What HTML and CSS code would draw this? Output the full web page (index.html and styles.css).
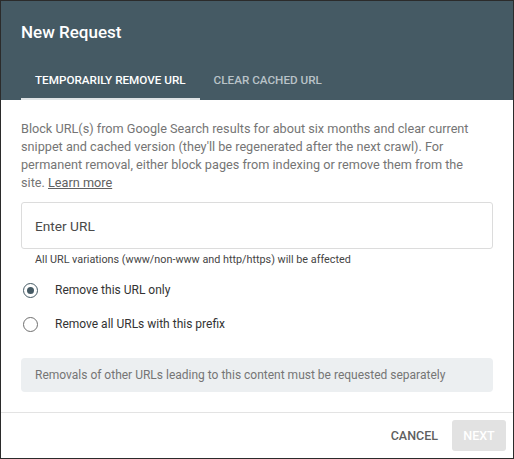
FILE: index.html
```html
<!DOCTYPE html>
<html lang="en">
<head>
    <meta charset="UTF-8">
    <title>New Request</title>
    <link rel="stylesheet" href="styles.css">
</head>
<body>

    <div class="dialog">
        <!-- Header with title and tabs -->
        <div class="dialog-header">
            <h2 class="dialog-title">New Request</h2>
            <div class="tabs">
                <div class="tab active">TEMPORARILY REMOVE URL</div>
                <div class="tab">CLEAR CACHED URL</div>
            </div>
        </div>

        <!-- Body -->
        <div class="dialog-body">
            <p class="intro">Block URL(s) from Google Search results for about six months and clear current snippet and cached version (they'll be regenerated after the next crawl). For permanent removal, either block pages from indexing or remove them from the site. <a href="#">Learn more</a></p>

            <div class="url-field">
                <input type="text" placeholder="Enter URL">
            </div>
            <div class="hint">All URL variations (www/non-www and http/https) will be affected</div>

            <div class="radios">
                <label class="radio-row">
                    <span class="radio checked"></span>
                    <span class="radio-label">Remove this URL only</span>
                </label>
                <label class="radio-row">
                    <span class="radio"></span>
                    <span class="radio-label">Remove all URLs with this prefix</span>
                </label>
            </div>

            <div class="note">Removals of other URLs leading to this content must be requested separately</div>
        </div>

        <!-- Footer buttons -->
        <div class="dialog-footer">
            <button class="btn-text">CANCEL</button>
            <button class="btn-next" disabled>NEXT</button>
        </div>
    </div>

</body>
</html>
```

FILE: styles.css
```css
/* Page */
body {
    margin: 0;
    font-family: Roboto, 'Liberation Sans', Arial, sans-serif;
    background: #fff;
}

.dialog {
    width: 514px;
    height: 459px;
    box-sizing: border-box;
    border: 1px solid #2b2b2b;
    display: flex;
    flex-direction: column;
    background: #fff;
}

/* Header */
.dialog-header {
    background-color: #455a64;
    padding: 0 20px;
    height: 99px;
    display: flex;
    flex-direction: column;
}

.dialog-title {
    margin: 0;
    padding-top: 20px;
    font-size: 17px;
    font-weight: 500;
    line-height: 22px;
    color: #fff;
}

.tabs {
    display: flex;
    margin-top: auto;
}

.tab {
    padding: 0 14px;
    height: 39px;
    display: flex;
    align-items: center;
    font-size: 11.7px;
    font-weight: 500;
    color: #b9c3c8;
    box-sizing: border-box;
    border-bottom: 2px solid transparent;
}

.tab.active {
    color: #fff;
    border-bottom-color: #dfe3e5;
}

/* Body */
.dialog-body {
    padding: 20px 20px 0;
    flex: 1;
}

.intro {
    margin: 0;
    padding-right: 10px;
    font-size: 12.7px;
    line-height: 18px;
    color: #757575;
}

.intro a {
    color: #616161;
    text-decoration: underline;
}

.url-field {
    margin-top: 10px;
}

.url-field input {
    width: 100%;
    box-sizing: border-box;
    height: 47px;
    border: 1px solid #dcdcdc;
    border-radius: 3px;
    padding: 0 13px;
    font-family: inherit;
    font-size: 13.7px;
    outline: none;
}

.url-field input::placeholder {
    color: #4a4a4a;
}

.hint {
    padding: 4px 14px 0;
    font-size: 10.8px;
    line-height: 14px;
    color: #444;
}

.radios {
    margin-top: 6px;
}

.radio-row {
    display: flex;
    align-items: center;
    height: 34px;
    cursor: pointer;
}

.radio {
    width: 15px;
    height: 15px;
    box-sizing: border-box;
    border: 1.5px solid #6f6f6f;
    border-radius: 50%;
    margin-left: 2px;
    display: flex;
    align-items: center;
    justify-content: center;
}

.radio.checked {
    border-color: #455a64;
}

.radio.checked::after {
    content: "";
    width: 7px;
    height: 7px;
    border-radius: 50%;
    background: #455a64;
}

.radio-label {
    margin-left: 17px;
    font-size: 12px;
    color: #333;
}

.note {
    margin-top: 17px;
    height: 34px;
    display: flex;
    align-items: center;
    padding: 0 14px;
    background: #eceff1;
    border-radius: 4px;
    font-size: 12px;
    color: #757575;
    white-space: nowrap;
}

/* Footer */
.dialog-footer {
    border-top: 1px solid #e3e3e3;
    height: 45px;
    display: flex;
    align-items: center;
    justify-content: flex-end;
    padding: 0 7px;
}

.btn-text {
    background: none;
    border: none;
    font-family: inherit;
    font-size: 12.5px;
    font-weight: 500;
    color: #5f5f5f;
    padding: 0 14px;
}

.btn-next {
    width: 54px;
    height: 31px;
    background: #e2e2e2;
    border: none;
    border-radius: 3px;
    font-family: inherit;
    font-size: 12.5px;
    font-weight: 500;
    color: #fff;
}
```
